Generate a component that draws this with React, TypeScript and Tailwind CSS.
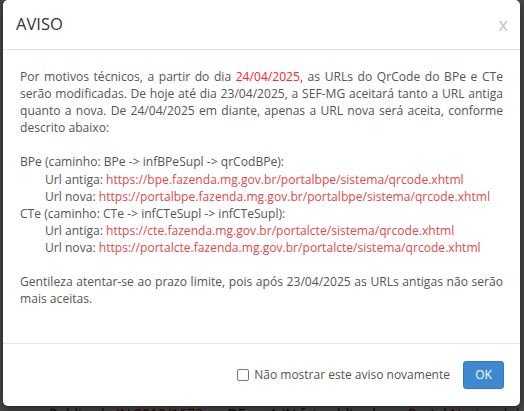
import React from "react";

export default function App() {
  const link = "text-[#e24a4a]";
  return (
    <div className="relative w-[524px] h-[411px] overflow-hidden bg-white font-['Open_Sans',sans-serif]">
      <div className="pt-[404px] pl-[40px] text-[14px] text-[#222] leading-[20px] whitespace-nowrap">
        • Publicada <span className="text-[#b00]">IN 2019/1672</span> no DF-e - A IN foi publicada no <span className="text-[#b00]">Portal Nacional do</span>
      </div>
      <div className="absolute inset-0 bg-black/[.72]" />
      <div className="absolute left-[3px] top-0 w-[517px] h-[406px] bg-white rounded-[5px] flex flex-col shadow-[0_3px_9px_rgba(0,0,0,0.5)]">
        <div className="h-[50px] border-b border-[#e5e5e5] flex items-center justify-between pl-[13px] pr-[12px]">
          <span className="text-[16.5px] text-[#333]">AVISO</span>
          <span className="text-[18px] text-[#c6c6c6] leading-none -mt-[2px]">x</span>
        </div>
        <div className="h-[293px] px-[17px] pt-[18px] text-[12.1px] leading-[17.1px] text-[#555] text-justify">
          Por motivos técnicos, a partir do dia <span className="text-[#ff2323]">24/04/2025</span>, as URLs do QrCode do BPe e CTe serão modificadas. De hoje até dia 23/04/2025, a SEF-MG aceitará tanto a URL antiga quanto a nova. De 24/04/2025 em diante, apenas a URL nova será aceita, conforme descrito abaixo:
          <br />
          <br />
          BPe (caminho: BPe -&gt; infBPeSupl -&gt; qrCodBPe):
          <br />
          <span className="inline-block w-[25px]" />Url antiga: <span className={link}>https://bpe.fazenda.mg.gov.br/portalbpe/sistema/qrcode.xhtml</span>
          <br />
          <span className="inline-block w-[25px]" />Url nova: <span className={link}>https://portalbpe.fazenda.mg.gov.br/portalbpe/sistema/qrcode.xhtml</span>
          <br />
          CTe (caminho: CTe -&gt; infCTeSupl -&gt; infCTeSupl):
          <br />
          <span className="inline-block w-[25px]" />Url antiga: <span className={link}>https://cte.fazenda.mg.gov.br/portalcte/sistema/qrcode.xhtml</span>
          <br />
          <span className="inline-block w-[25px]" />Url nova: <span className={link}>https://portalcte.fazenda.mg.gov.br/portalcte/sistema/qrcode.xhtml</span>
          <br />
          <br />
          Gentileza atentar-se ao prazo limite, pois após 23/04/2025 as URLs antigas não serão mais aceitas.
        </div>
        <div className="flex-1 border-t border-[#e5e5e5] flex items-center justify-end pr-[16px]">
          <label className="flex items-center gap-[5px] text-[12px] text-[#555] mr-[13px]">
            <span className="inline-block w-[12px] h-[12px] border border-[#767676] rounded-[2px] bg-white" />
            Não mostrar este aviso novamente
          </label>
          <button className="w-[41px] h-[28px] rounded-[3px] bg-[#3e89d0] border border-[#3579ba] text-white text-[12px] flex items-center justify-center">
            OK
          </button>
        </div>
      </div>
    </div>
  );
}
